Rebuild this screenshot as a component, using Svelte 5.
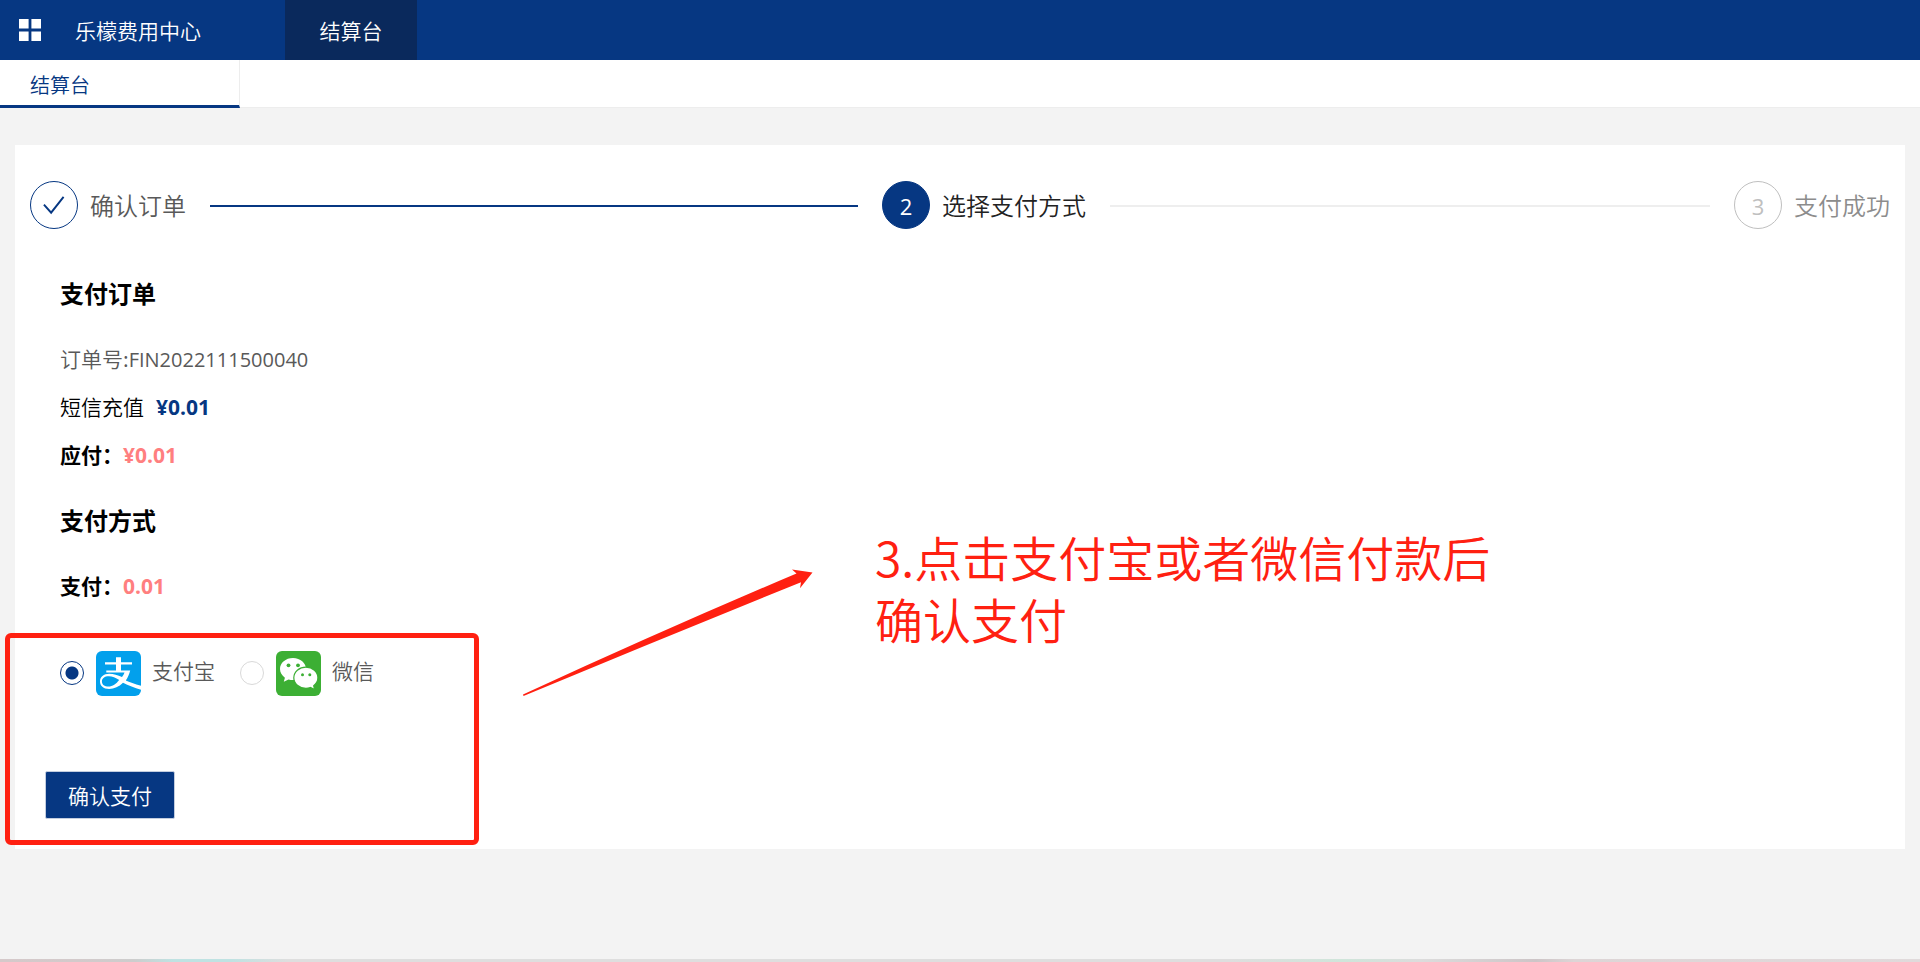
<script>
  let method = $state('alipay');
  const tabs = ['结算台'];
</script>

<div class="page">
  <header class="topbar">
    <div class="brand">
      <button class="apps" type="button" aria-label="应用">
        <svg viewBox="0 0 22 22" aria-hidden="true">
          <path fill="#fff" d="M0 0h9.6v9.6H0zM12.4 0H22v9.6h-9.6zM0 12.4h9.6V22H0zM12.4 12.4H22V22h-9.6z" />
        </svg>
      </button>
      <span>乐檬费用中心</span>
    </div>
    <nav>
      <a class="navlink" href="#checkout">结算台</a>
    </nav>
  </header>

  <nav class="tabs">
    {#each tabs as tab}
      <a class="tab" href="#checkout">{tab}</a>
    {/each}
  </nav>

  <main class="card">
    <ol class="steps">
      <li class="step done">
        <span class="dot">
          <svg viewBox="0 0 48 48" aria-hidden="true">
            <path d="M13.500 23.500l7.500 8.500L34 15.500" fill="none" stroke="#063782" stroke-width="2" />
          </svg>
        </span>
        <span class="label">确认订单</span>
      </li>
      <li class="step active">
        <span class="dot">2</span>
        <span class="label">选择支付方式</span>
      </li>
      <li class="step wait">
        <span class="dot">3</span>
        <span class="label">支付成功</span>
      </li>
    </ol>

    <section class="block">
      <h2>支付订单</h2>
      <p class="row muted">订单号:<span class="num">FIN2022111500040</span></p>
      <p class="row">短信充值<strong class="num price">¥0.01</strong></p>
      <p class="row bold">应付：<span class="num due">¥0.01</span></p>
    </section>

    <section class="block">
      <h2>支付方式</h2>
      <p class="row bold">支付：<span class="num due">0.01</span></p>
    </section>

    <form class="pay" onsubmit={(e) => e.preventDefault()}>
      <div class="methods">
        <label class="method">
          <input type="radio" name="method" value="alipay" bind:group={method} />
          <svg class="logo" viewBox="0 0 45 45" aria-hidden="true">
            <rect width="45" height="45" rx="6" fill="#02a0ec" />
            <path fill="#fff" d="M20 6.300h5v4.900h11v2.300H25v6h9.200c-1 3.900-2.300 6.900-4.400 9.900 3.500 1.600 8.900 3.600 15.200 5.300v4.100c-6.500-2-12.600-4.600-18-7.100-4 4-8.800 6.200-13.800 6.200C7.300 37.900 4 34.700 4 30.400c0-4.500 3.600-7.700 9.300-7.700 4.300 0 8.500 1.400 12.700 3.400 1.300-1.700 2-3 2.500-4.500H10.300v-2.100H20v-6H9v-2.300h11z" />
            <path fill="#02a0ec" d="M23.200 28.900c-3.500-2-6.900-3.700-10.300-3.700-4.300 0-7 2-7 5.200 0 2.900 2.600 5.100 6.700 5.100 3.800 0 7.700-2.800 10.600-6.600z" />
          </svg>
          <span class="name">支付宝</span>
        </label>
        <label class="method">
          <input type="radio" name="method" value="wechat" bind:group={method} />
          <svg class="logo" viewBox="0 0 45 45" aria-hidden="true">
            <rect width="45" height="45" rx="6" fill="#3caf34" />
            <g fill="#fff">
              <path d="M17 7C9.600 7 4 11.900 4 18.100c0 3.500 1.800 6.500 4.900 8.600L7.800 30.800l4.700-2.300c1.500.4 3 .6 4.500.6 7.400 0 13-4.900 13-11S24.400 7 17 7z" />
              <path d="M29.900 16.200c6.700 0 12 4.700 12 10.600 0 3.100-1.600 5.900-4.200 7.900l.9 3.800-4.200-2c-1.400.5-2.900.8-4.500.8-6.700 0-12.100-4.700-12.100-10.500 0-5.900 5.400-10.600 12.100-10.600z" stroke="#3caf34" stroke-width="1.200" />
            </g>
            <g fill="#3caf34">
              <circle cx="12.500" cy="14.300" r="1.900" />
              <circle cx="22" cy="14.300" r="1.900" />
              <circle cx="26.500" cy="23.700" r="1.500" />
              <circle cx="33.800" cy="23.700" r="1.500" />
            </g>
          </svg>
          <span class="name">微信</span>
        </label>
      </div>
      <button class="confirm" type="submit">确认支付</button>
      <div class="frame"></div>
    </form>

    <svg class="arrow" viewBox="0 0 290 128" aria-hidden="true">
      <path fill="#ff2011" d="M0 125.500Q140 61 273.500 4.500L269 .5 289.500 3.500 277 19.300 278 13.300Q140 69 .5 127z" />
    </svg>
    <p class="note">3.点击支付宝或者微信付款后<br />确认支付</p>
  </main>

  <div class="strip"></div>
</div>

<style>
  :global(body) {
    margin: 0;
  }
  .page {
    --blue: #063782;
    --red: #ff2011;
    display: flex;
    flex-direction: column;
    min-height: 100vh;
    background: #f3f3f3;
    color: #000;
    font: 350 21px/48px 'Noto Sans CJK SC', sans-serif;
  }
  .topbar {
    display: flex;
    height: 60px;
    background: var(--blue);
    color: #fff;
    line-height: 60px;
  }
  .brand {
    display: flex;
    align-items: center;
    gap: 34px;
    width: 285px;
    padding-left: 19px;
    box-sizing: border-box;
  }
  .apps {
    display: flex;
    padding: 0;
    border: 0;
    background: none;
  }
  .apps svg {
    width: 22px;
    height: 22px;
  }
  .navlink {
    display: block;
    min-width: 132px;
    background: #0a295c;
    color: #fff;
    text-align: center;
    text-decoration: none;
  }
  .tabs {
    display: flex;
    height: 47px;
    border-bottom: 1px solid #ededed;
    background: #fff;
  }
  .tab {
    width: 240px;
    height: 48px;
    box-sizing: border-box;
    padding-left: 30px;
    border-right: 1px solid #ededed;
    border-bottom: 3px solid var(--blue);
    color: var(--blue);
    font-size: 20px;
    line-height: 50px;
    text-decoration: none;
  }
  .card {
    position: relative;
    margin: 37px 15px 0;
    padding: 36px 15px 30px;
    background: #fff;
  }
  .steps {
    display: flex;
    gap: 24px;
    margin: 0 0 46px;
    padding: 0;
    list-style: none;
    font-size: 24px;
  }
  .step {
    display: flex;
    align-items: center;
    flex: 1;
    gap: 12px;
  }
  .step:last-child {
    flex: none;
  }
  .step:not(:last-child)::after {
    content: '';
    flex: 1;
    height: 2px;
    margin: 2px 0 0 12px;
    background: #eee;
  }
  .step.done::after {
    background: var(--blue);
  }
  .dot {
    width: 48px;
    height: 48px;
    box-sizing: border-box;
    border: 1px solid #bfbfbf;
    border-radius: 50%;
    color: #bfbfbf;
    font-family: 'Open Sans', sans-serif;
    font-weight: 400;
    font-size: 22px;
    line-height: 48px;
    text-align: center;
  }
  .dot svg {
    display: block;
  }
  .done .dot {
    border-color: var(--blue);
  }
  .active .dot {
    border-color: var(--blue);
    background: var(--blue);
    color: #fff;
  }
  .done .label {
    color: #595959;
  }
  .active .label {
    color: #222;
  }
  .wait .label {
    color: #8c8c8c;
  }
  .block {
    margin: 0 30px 24px;
  }
  h2 {
    margin: 0 0 23px;
    font-size: 24px;
    font-weight: 700;
    line-height: 36px;
  }
  p {
    margin: 0;
  }
  .row {
    height: 48px;
  }
  .num {
    font-family: 'Open Sans', sans-serif;
    font-size: 21px;
    line-height: 24px;
  }
  .muted {
    color: #595959;
  }
  .muted .num {
    font-size: 20px;
    font-weight: 400;
  }
  .bold {
    font-weight: 700;
  }
  .price {
    margin-left: 12px;
    color: var(--blue);
    font-weight: 700;
  }
  .due {
    color: #ff7f7f;
  }
  .pay {
    position: relative;
    margin-top: 42px;
    padding-left: 15px;
  }
  .methods {
    display: flex;
    gap: 25px;
    padding-left: 15px;
    color: #595959;
  }
  .method {
    display: flex;
    align-items: center;
    height: 45px;
  }
  .name {
    padding-bottom: 8px;
  }
  .method input {
    appearance: none;
    box-sizing: border-box;
    width: 24px;
    height: 24px;
    margin: 0 12px 2px 0;
    border: 1px solid #d9d9d9;
    border-radius: 50%;
    background: #fff;
  }
  .method input:checked {
    border-color: var(--blue);
    background: radial-gradient(circle, var(--blue) 6px, #fff 7px);
  }
  .logo {
    width: 45px;
    height: 45px;
    margin-right: 11px;
  }
  .confirm {
    display: block;
    height: 48px;
    margin-top: 75px;
    padding: 0 22px;
    border: 1px solid #c3cddf;
    border-radius: 2px;
    background: var(--blue);
    color: #fff;
    font: inherit;
    line-height: 46px;
  }
  .frame {
    position: absolute;
    top: -18px;
    left: -25px;
    width: 474px;
    height: 212px;
    box-sizing: border-box;
    border: 5px solid var(--red);
    border-radius: 6px;
    pointer-events: none;
  }
  .arrow {
    position: absolute;
    top: 424px;
    left: 508px;
    width: 290px;
    height: 128px;
  }
  .note {
    position: absolute;
    top: 380px;
    left: 860px;
    color: var(--red);
    font-size: 48px;
    line-height: 62px;
    white-space: nowrap;
  }
  .strip {
    height: 3px;
    margin-top: auto;
    background: linear-gradient(
      to right,
      #d5c9ca 0,
      #d3cacb 4%,
      #cdcdcd 7%,
      #bfe2e2 9%,
      #bfe2e2 12%,
      #dedede 15%,
      #dedede 64%,
      #cfe5da 70%,
      #dcdcdc 74%,
      #cdc5c7 80%,
      #ddd5d6 82%,
      #e0dadb 100%
    );
  }
</style>
